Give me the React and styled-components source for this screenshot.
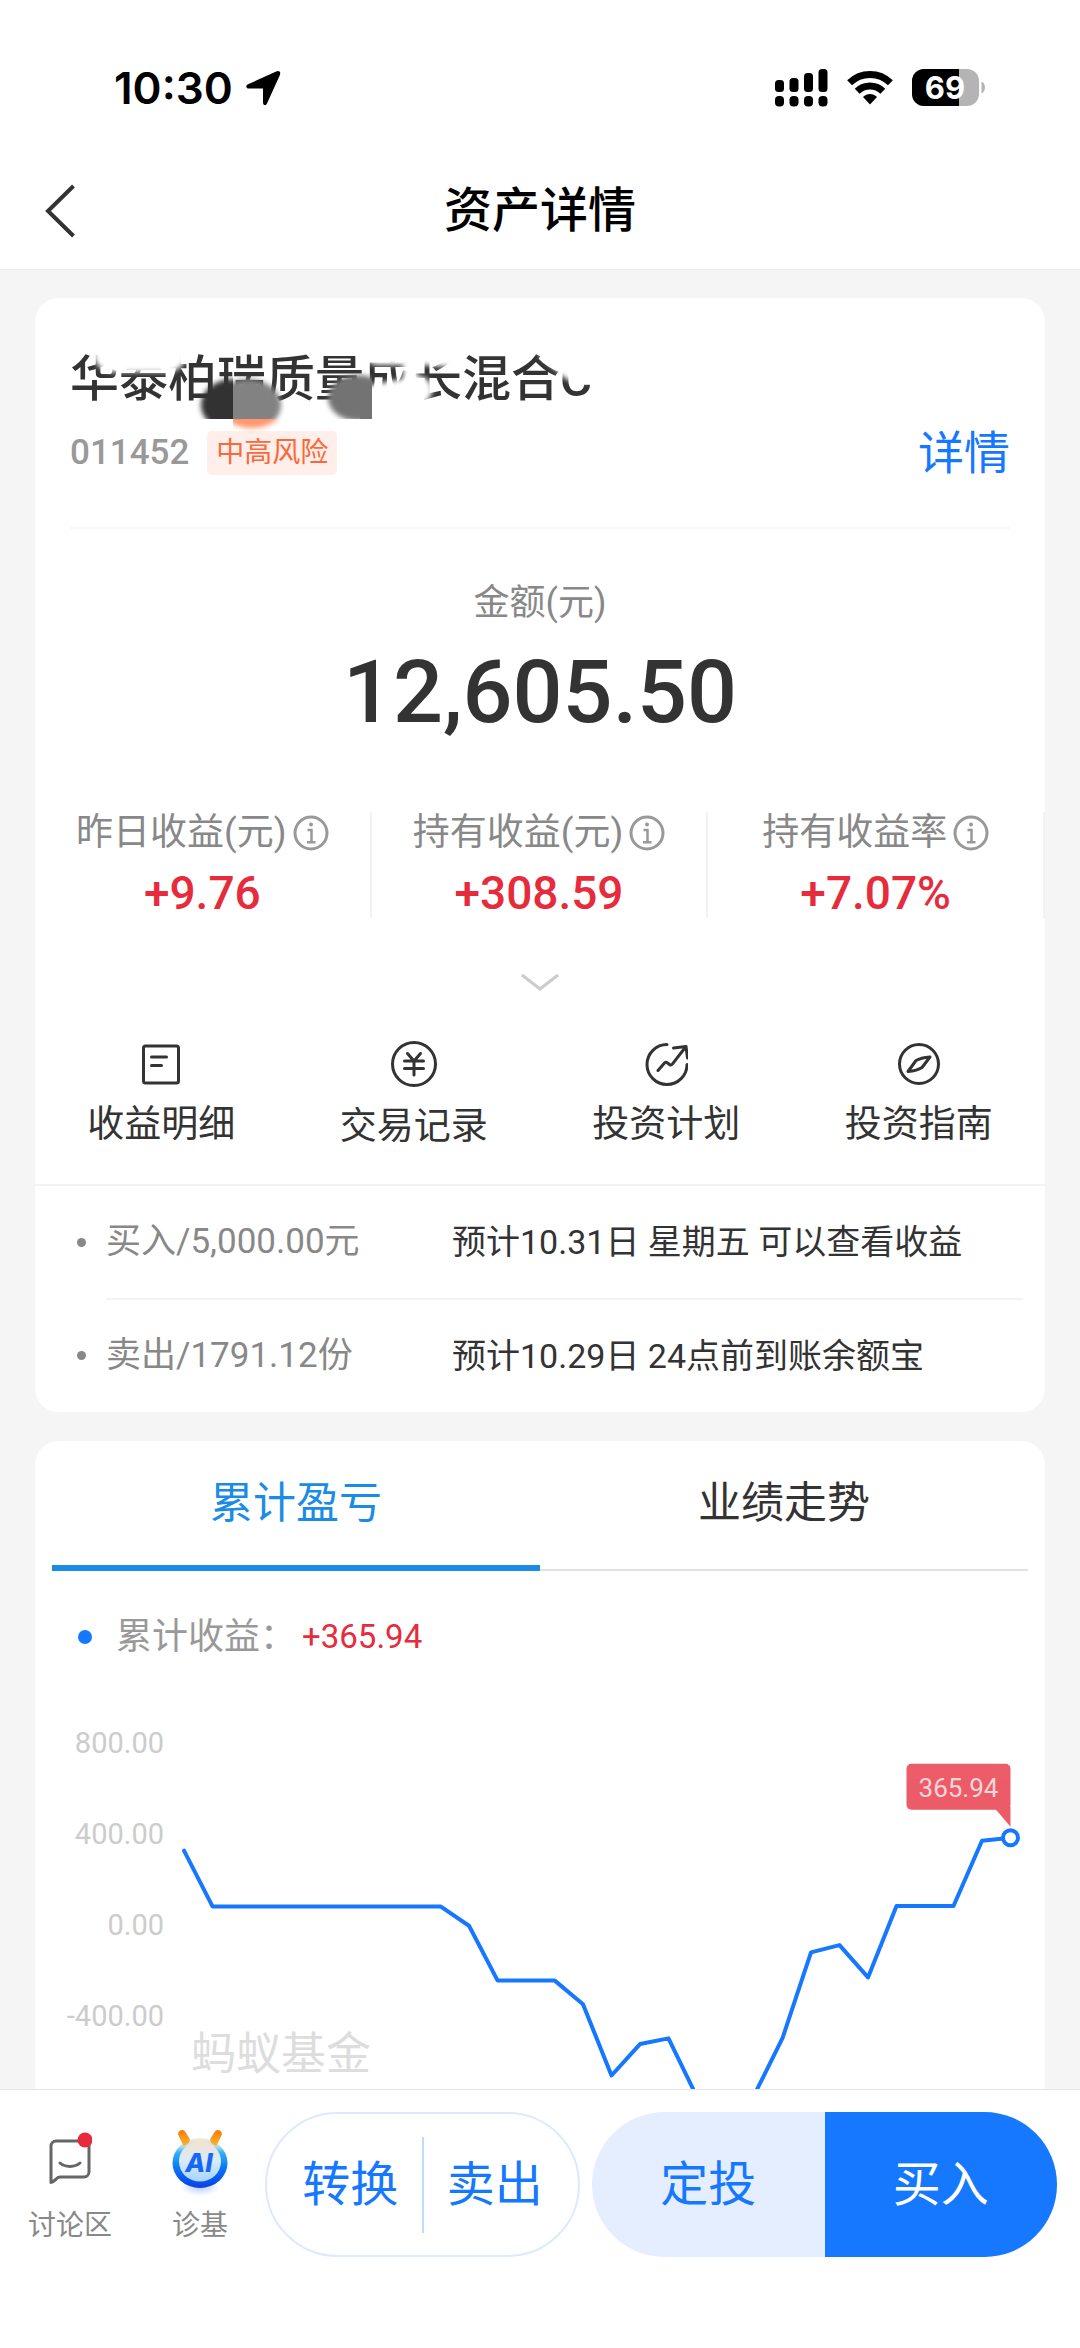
import React, { useState } from 'react';
import styled, { createGlobalStyle } from 'styled-components';

const GlobalStyle = createGlobalStyle`
  * {
    box-sizing: border-box;
  }

  body {
    margin: 0;
    background: #f5f5f5;
    color: #333;
    font-family: Roboto, 'Noto Sans CJK SC', sans-serif;
  }

  button {
    margin: 0;
    padding: 0;
    border: 0;
    background: none;
    color: inherit;
    font: inherit;
    cursor: pointer;
  }

  h1, h2, p, ul, dl, dd, dt {
    margin: 0;
    padding: 0;
    font-weight: inherit;
  }

  svg {
    display: block;
    flex: none;
  }
`;

const Screen = styled.div`
  display: flex;
  flex-direction: column;
  height: 100vh;
`;

const Header = styled.header`
  background: #fff;
  border-bottom: 1px solid #eee;
  flex: none;
`;

const StatusBar = styled.div`
  display: flex;
  align-items: center;
  justify-content: space-between;
  height: 152px;
  padding: 24px 94px 0 114px;
  color: #000;
`;

const StatusGroup = styled.div`
  display: flex;
  align-items: center;
  gap: ${(props) => props.$gap}px;
`;

const Clock = styled.span`
  font: 600 44px/56px Inter, sans-serif;
`;

const NavBar = styled.div`
  display: grid;
  grid-template-columns: 120px 1fr 120px;
  align-items: center;
  height: 117px;
`;

const BackButton = styled.button`
  display: flex;
  padding: 20px 44px;
`;

const Title = styled.h1`
  color: #000;
  font-size: 48px;
  font-weight: 500;
  line-height: 56px;
  text-align: center;
`;

const Content = styled.main`
  flex: 1;
  min-height: 0;
  padding: 28px 35px 0;
  overflow-y: auto;
  scrollbar-width: none;
`;

const Card = styled.section`
  margin-bottom: 29px;
  border-radius: 24px;
  background: #fff;
  overflow: hidden;
`;

const FundHead = styled.div`
  margin: 0 35px;
  padding: 54px 0 51px;
  border-bottom: 2px solid #f7f7f7;
`;

const FundName = styled.h2`
  position: relative;
  font-size: 49px;
  font-weight: 500;
  line-height: 56px;
`;

const Smudge = styled.svg`
  position: absolute;
  top: -2px;
  left: 0;
`;

const FundMeta = styled.div`
  display: flex;
  align-items: center;
  margin-top: 22px;
  line-height: 46px;
`;

const FundCode = styled.span`
  color: #999;
  font-size: 35px;
  font-weight: 500;
`;

const RiskTag = styled.span`
  margin-left: 18px;
  padding: 0 9px;
  border-radius: 5px;
  background: #ffeee9;
  color: #f9693a;
  font-size: 28px;
  line-height: 44px;
`;

const DetailLink = styled.a`
  margin-left: auto;
  color: #1677ff;
  font-size: 46px;
  text-decoration: none;
`;

const AmountLabel = styled.p`
  margin-top: 52px;
  color: #888;
  font-size: 36px;
  line-height: 44px;
  text-align: center;
`;

const Amount = styled.p`
  margin-top: 17px;
  font-size: 88px;
  font-weight: 500;
  line-height: 100px;
  text-align: center;
`;

const Stats = styled.dl`
  display: grid;
  grid-template-columns: repeat(3, 1fr);
  margin-top: 70px;
`;

const Stat = styled.div`
  border-right: 2px solid #f2f2f2;
`;

const StatLabel = styled.dt`
  display: flex;
  align-items: center;
  justify-content: center;
  gap: 6px;
  color: #888;
  font-size: 37px;
  line-height: 42px;
`;

const StatValue = styled.dd`
  margin-top: 14px;
  color: #e62c3c;
  font-size: 46px;
  font-weight: 500;
  line-height: 50px;
  text-align: center;
`;

const ExpandButton = styled.button`
  display: block;
  margin: 52px auto 0;
`;

const Actions = styled.nav`
  display: grid;
  grid-template-columns: repeat(4, 1fr);
  align-items: center;
  padding: 46px 0 34px;
  border-bottom: 2px solid #f3f3f3;
`;

const ActionButton = styled.button`
  display: flex;
  flex-direction: column;
  align-items: center;
  gap: 16px;
  font-size: 37px;
  line-height: 46px;
`;

const Orders = styled.ul`
  list-style: none;
`;

const Order = styled.li`
  display: flex;
  align-items: center;
  padding: 0 22px 0 42px;
  line-height: 44px;
`;

const Bullet = styled.span`
  flex: none;
  width: ${(props) => props.$size}px;
  height: ${(props) => props.$size}px;
  border-radius: 50%;
  background: ${(props) => props.$color};
`;

const OrderBody = styled.div`
  display: flex;
  align-items: center;
  flex: 1;
  min-height: 112px;
  margin-left: 20px;

  ${Order} + ${Order} & {
    min-height: 114px;
    border-top: 2px solid #f3f3f3;
  }
`;

const OrderName = styled.span`
  flex: 0 0 346px;
  color: #888;
  font-size: 35px;
`;

const OrderNote = styled.span`
  font-size: 34px;
`;

const Tabs = styled.div`
  display: grid;
  grid-template-columns: 1fr 1fr;
  margin: 0 17px;
  box-shadow: inset 0 -2px #e2e2e2;
`;

const Tab = styled.button`
  height: 130px;
  border-bottom: 6px solid ${(props) => (props.$active ? '#1b8ce6' : 'transparent')};
  color: ${(props) => (props.$active ? '#1b8ce6' : '#333')};
  font-size: 43px;
  line-height: 56px;
`;

const Legend = styled.p`
  display: flex;
  align-items: center;
  margin: 44px 43px 0;
  line-height: 44px;
`;

const LegendLabel = styled.span`
  margin-left: 24px;
  color: #999;
  font-size: 36px;
`;

const LegendValue = styled.span`
  margin-left: 6px;
  color: #e62c3c;
  font-size: 33px;
`;

const ChartSvg = styled.svg`
  width: 100%;
  height: auto;
`;

const Footer = styled.footer`
  display: flex;
  flex: none;
  align-items: flex-start;
  padding: 22px 23px 91px 5px;
  border-top: 1px solid #e6e6e6;
  background: #fff;
`;

const Shortcut = styled.button`
  display: flex;
  flex-direction: column;
  align-items: center;
  gap: 10px;
  width: 130px;
  padding-top: 14px;
  color: #888;
  font-size: 28px;
  line-height: 40px;
`;

const TradeBar = styled.div`
  display: grid;
  grid-template-columns: 315fr 465fr;
  gap: 12px;
  flex: 1;
`;

const Pill = styled.div`
  display: flex;
  align-items: center;
  height: 145px;
  padding: ${(props) => (props.$outlined ? '0 12px' : '0')};
  border: ${(props) => (props.$outlined ? '2px solid #dce9ff' : '0')};
  border-radius: 73px;
  overflow: hidden;
`;

const PillButton = styled.button`
  flex: 1;
  height: 100%;
  background: ${(props) => props.$bg || 'transparent'};
  color: ${(props) => props.$color || '#1677ff'};
  font-size: 48px;
  line-height: 56px;
`;

const PillDivider = styled.span`
  width: 2px;
  height: 96px;
  background: #bfdaff;
`;

const LocationIcon = () => (
  <svg width="36" height="36" viewBox="0 0 36 36">
    <path d="M34.500 1.500c1 .9.900 2.200.4 3.400L22 33.500c-1.200 2.600-4 1.900-4-1V18.500H4c-3 0-3.700-3-1-4.200L31.200 1.400c1.300-.6 2.400-.7 3.300.1z" />
  </svg>
);

const SignalIcon = () => (
  <svg width="53" height="38" viewBox="0 0 53 38">
    {[11, 9, 4, 0].map((top, i) => (
      <g key={top}>
        <rect x={i * 14.500} y={top} width="9" height={23 - top} rx="3.500" />
        <rect x={i * 14.500} y="27" width="9" height="10.500" rx="4" />
      </g>
    ))}
  </svg>
);

const WifiIcon = () => (
  <svg width="46" height="36" viewBox="0 0 46 36">
    <g fill="none" stroke="#000" strokeWidth="7">
      <path d="M2.600 12.800a29 29 0 0 1 40.800 0" />
      <path d="M10.200 21.200a18.200 18.200 0 0 1 25.600 0" />
    </g>
    <path d="M23 34.500l-7-7.500c3.800-4 10.200-4 14 0z" />
  </svg>
);

const BatteryIcon = () => (
  <svg width="74" height="38" viewBox="0 0 74 38">
    <defs>
      <clipPath id="battery">
        <rect width="67" height="37" rx="12" />
      </clipPath>
    </defs>
    <g clipPath="url(#battery)">
      <rect width="67" height="37" fill="#b4b4b4" />
      <rect width="47" height="37" />
    </g>
    <path d="M69.500 12.500c4.600 1.800 4.600 10.200 0 12z" fill="#b4b4b4" />
    <text x="33" y="30" fill="#fff" fontFamily="Inter, sans-serif" fontSize="31" fontWeight="700" textAnchor="middle">
      69
    </text>
  </svg>
);

const BackIcon = () => (
  <svg width="32" height="54" viewBox="0 0 32 54" fill="none" stroke="#333" strokeWidth="4">
    <path d="M29.500 2L4 27l25.500 25" />
  </svg>
);

const InfoIcon = () => (
  <svg width="36" height="36" viewBox="0 0 36 36" fill="none" stroke="#999" strokeWidth="3">
    <circle cx="18" cy="18" r="16" />
    <path d="M14.500 15h4v12M14 27.200h8.500" strokeWidth="2.500" />
    <circle cx="18" cy="9.500" r="2" fill="#999" stroke="none" />
  </svg>
);

const ChevronIcon = () => (
  <svg width="40" height="24" viewBox="0 0 40 24" fill="none" stroke="#ccc" strokeWidth="3">
    <path d="M2 5l18 14L38 5" />
  </svg>
);

const lineIcon = {
  fill: 'none',
  stroke: '#333',
  strokeWidth: 3,
  strokeLinecap: 'round',
  strokeLinejoin: 'round',
};

const ListIcon = () => (
  <svg width="44" height="44" viewBox="0 0 44 44" {...lineIcon}>
    <rect x="4.500" y="4" width="35" height="37" rx="2" />
    <path d="M12.500 15h15M12.500 23.500h10" />
  </svg>
);

const YuanIcon = () => (
  <svg width="48" height="48" viewBox="0 0 48 48" {...lineIcon}>
    <circle cx="24" cy="24" r="21.500" />
    <path d="M17.500 13.500L24 21l6.500-7.500M24 21v14M14.500 21h19M14.500 28.500h19" />
  </svg>
);

const PlanIcon = () => (
  <svg width="44" height="44" viewBox="0 0 44 44" {...lineIcon}>
    <path d="M23 2.500A20 20 0 1 0 43 22.500" />
    <path d="M14 28.500l6.500-7.500c1-1 2-1 3 0l2 1.500c1 .8 2 .6 3-.6L42 4.500M29.500 6L42 4.500l1.500 11.500" />
  </svg>
);

const CompassIcon = () => (
  <svg width="44" height="44" viewBox="0 0 44 44" {...lineIcon}>
    <circle cx="22" cy="22" r="19.500" />
    <path d="M33 15l-8 10.500c-3.500 2.300-8.500 3.500-14 4L19 18.500c3.500-2 8.500-3 14-3.500z" />
  </svg>
);

const ForumIcon = () => (
  <svg width="44" height="70" viewBox="0 0 44 70" fill="none" stroke="#666" strokeWidth="3">
    <path d="M3 53V20a5 5 0 0 1 5-5h28a5 5 0 0 1 5 5v26a5 5 0 0 1-5 5H12c-4 0-5.500 5.500-9 5.500z" strokeLinejoin="round" />
    <path d="M12 37c5 4.500 15 4.500 20 0" strokeLinecap="round" />
    <circle cx="37" cy="14" r="7.500" fill="#e62c3c" stroke="none" />
  </svg>
);

const AiIcon = () => (
  <svg width="60" height="70" viewBox="0 -4 60 70">
    <defs>
      <linearGradient id="ring" x1="0" y1="0" x2="0" y2="1">
        <stop offset="0" stopColor="#ffe9cf" />
        <stop offset="0.150" stopColor="#bfe3ee" />
        <stop offset="0.300" stopColor="#2fb0f5" />
        <stop offset="0.600" stopColor="#0b76f6" />
        <stop offset="1" stopColor="#0a3fe6" />
      </linearGradient>
      <linearGradient id="face" x1="0" y1="0" x2="0" y2="1">
        <stop offset="0" stopColor="#f3e2cf" />
        <stop offset="0.500" stopColor="#d8ebfb" />
        <stop offset="1" stopColor="#a5d4fc" />
      </linearGradient>
      <linearGradient id="horn" x1="0" y1="0" x2="0" y2="1">
        <stop offset="0" stopColor="#f57a0a" />
        <stop offset="1" stopColor="#ffb52e" />
      </linearGradient>
      <radialGradient id="glow">
        <stop offset="0" stopColor="#b9ccff" />
        <stop offset="1" stopColor="#fff" />
      </radialGradient>
    </defs>
    <ellipse cx="30" cy="57" rx="20" ry="9" fill="url(#glow)" />
    <ellipse cx="30" cy="33" rx="27.500" ry="25" fill="url(#ring)" />
    <ellipse cx="30" cy="31.500" rx="21" ry="20" fill="url(#face)" />
    <path d="M9.500 1c2-1.700 4.500-1 5.700.8l4.300 6.700c1.500 3-2.500 6.500-6 7.500L8.700 5.800c-1-1.700-.8-3.500.8-4.800z" fill="url(#horn)" />
    <path d="M50.500 1c-2-1.700-4.500-1-5.700.8l-4.300 6.700c-1.500 3 2.500 6.500 6 7.500l4.800-10.200c1-1.700.8-3.500-.8-4.800z" fill="url(#horn)" />
    <text
      x="29"
      y="42"
      fill="#1767f5"
      fontFamily="Inter, sans-serif"
      fontSize="26"
      fontStyle="italic"
      fontWeight="800"
      textAnchor="middle"
    >
      AI
    </text>
  </svg>
);

// brush marks hiding parts of the fund name
const NameSmudge = () => (
  <Smudge width="530" height="90" viewBox="0 0 530 90" aria-hidden="true">
    <defs>
      <filter id="soft" x="-20%" y="-50%" width="140%" height="200%">
        <feGaussianBlur stdDeviation="2.500" />
      </filter>
      <clipPath id="clipLeft"><rect x="120" y="10" width="43" height="59" /></clipPath>
      <clipPath id="clipRight"><rect x="163" y="10" width="60" height="59" /></clipPath>
      <clipPath id="clipTag"><rect x="163" y="69" width="60" height="20" /></clipPath>
      <clipPath id="clipLast"><rect x="240" y="10" width="62" height="59" /></clipPath>
    </defs>
    <g stroke="#fff" strokeLinecap="round" fill="none" filter="url(#soft)">
      <path d="M42 4h56" strokeWidth="36" />
      <path d="M308 2h44" strokeWidth="26" />
      <path d="M298 50l50-10" strokeWidth="28" />
      <path d="M340 8v38" strokeWidth="14" />
      <path d="M352 2l28 2" strokeWidth="26" />
      <path d="M480 0l16 14" strokeWidth="22" />
      <path d="M508 8h18" strokeWidth="48" />
    </g>
    <g clipPath="url(#clipLeft)">
      <ellipse cx="163" cy="55" rx="32" ry="26" fill="#333" filter="url(#soft)" />
    </g>
    <g clipPath="url(#clipRight)">
      <ellipse cx="178" cy="55" rx="33" ry="26" fill="#828282" filter="url(#soft)" />
    </g>
    <g clipPath="url(#clipTag)">
      <ellipse cx="182" cy="62" rx="28" ry="16" fill="#ff9770" filter="url(#soft)" />
    </g>
    <g clipPath="url(#clipLast)">
      <ellipse cx="288" cy="48" rx="30" ry="23" fill="#737373" filter="url(#soft)" />
      <rect x="290" y="35" width="12" height="34" fill="#737373" />
    </g>
  </Smudge>
);

const stats = [
  { label: '昨日收益(元)', value: '+9.76' },
  { label: '持有收益(元)', value: '+308.59' },
  { label: '持有收益率', value: '+7.07%' },
];

const actions = [
  { label: '收益明细', Icon: ListIcon },
  { label: '交易记录', Icon: YuanIcon },
  { label: '投资计划', Icon: PlanIcon },
  { label: '投资指南', Icon: CompassIcon },
];

const orders = [
  { name: '买入/5,000.00元', note: '预计10.31日 星期五 可以查看收益' },
  { name: '卖出/1791.12份', note: '预计10.29日 24点前到账余额宝' },
];

const profit = [
  309, 64, 64, 64, 64, 64, 64, 64, 64, 64, -21, -261, -261, -261, -366, -679, -541, -516, -774, -900,
  -767, -515, -138, -106, -248, 66, 66, 66, 353, 365.94,
];

const ticks = [800, 400, 0, -400];

const ZERO_Y = 262;
const toX = (i) => 149 + i * 28.5;
const toY = (value) => ZERO_Y - (value * 91) / 400;

const ProfitChart = () => {
  const last = profit.length - 1;
  const endX = toX(last);
  const endY = toY(profit[last]);

  return (
    <ChartSvg viewBox="0 0 1010 500" role="img" aria-label="累计收益走势">
      {ticks.map((tick) => (
        <text key={tick} x="129" y={toY(tick) + 14} fill="#ccc" fontSize="29" textAnchor="end">
          {tick.toFixed(2)}
        </text>
      ))}
      <text x="156" y="411" fill="#ddd" fontSize="45">蚂蚁基金</text>
      <polyline
        points={profit.map((value, i) => `${toX(i)},${toY(value)}`).join(' ')}
        fill="none"
        stroke="#1677ff"
        strokeWidth="4"
        strokeLinecap="round"
        strokeLinejoin="round"
      />
      <g fill="#e62c3c" opacity="0.770">
        <rect x={endX - 104} y={endY - 74} width="104" height="46" rx="5" />
        <path d={`M${endX - 17} ${endY - 31}h17v20z`} />
      </g>
      <text x={endX - 52} y={endY - 41} fill="#ffd5d9" fontSize="26" textAnchor="middle">
        {profit[last]}
      </text>
      <circle cx={endX} cy={endY} r="7.500" fill="#fff" stroke="#1677ff" strokeWidth="4" />
    </ChartSvg>
  );
};

const App = () => {
  const [tab, setTab] = useState('累计盈亏');

  return (
    <Screen>
      <GlobalStyle />
      <Header>
        <StatusBar>
          <StatusGroup $gap={12}>
            <Clock>10:30</Clock>
            <LocationIcon />
          </StatusGroup>
          <StatusGroup $gap={19}>
            <SignalIcon />
            <WifiIcon />
            <BatteryIcon />
          </StatusGroup>
        </StatusBar>
        <NavBar>
          <BackButton aria-label="返回">
            <BackIcon />
          </BackButton>
          <Title>资产详情</Title>
        </NavBar>
      </Header>

      <Content>
        <Card>
          <FundHead>
            <FundName>
              华泰柏瑞质量成长混合C
              <NameSmudge />
            </FundName>
            <FundMeta>
              <FundCode>011452</FundCode>
              <RiskTag>中高风险</RiskTag>
              <DetailLink href="#detail">详情</DetailLink>
            </FundMeta>
          </FundHead>

          <AmountLabel>金额(元)</AmountLabel>
          <Amount>12,605.50</Amount>

          <Stats>
            {stats.map(({ label, value }) => (
              <Stat key={label}>
                <StatLabel>
                  {label}
                  <InfoIcon />
                </StatLabel>
                <StatValue>{value}</StatValue>
              </Stat>
            ))}
          </Stats>

          <ExpandButton aria-label="展开">
            <ChevronIcon />
          </ExpandButton>

          <Actions>
            {actions.map(({ label, Icon }) => (
              <ActionButton key={label}>
                <Icon />
                {label}
              </ActionButton>
            ))}
          </Actions>

          <Orders>
            {orders.map(({ name, note }) => (
              <Order key={name}>
                <Bullet $size={9} $color="#888" />
                <OrderBody>
                  <OrderName>{name}</OrderName>
                  <OrderNote>{note}</OrderNote>
                </OrderBody>
              </Order>
            ))}
          </Orders>
        </Card>

        <Card>
          <Tabs role="tablist">
            {['累计盈亏', '业绩走势'].map((name) => (
              <Tab
                key={name}
                role="tab"
                aria-selected={tab === name}
                $active={tab === name}
                onClick={() => setTab(name)}
              >
                {name}
              </Tab>
            ))}
          </Tabs>
          <Legend>
            <Bullet $size={14} $color="#1677ff" />
            <LegendLabel>累计收益：</LegendLabel>
            <LegendValue>+365.94</LegendValue>
          </Legend>
          <ProfitChart />
        </Card>
      </Content>

      <Footer>
        <Shortcut>
          <ForumIcon />
          讨论区
        </Shortcut>
        <Shortcut>
          <AiIcon />
          诊基
        </Shortcut>
        <TradeBar>
          <Pill $outlined>
            <PillButton>转换</PillButton>
            <PillDivider />
            <PillButton>卖出</PillButton>
          </Pill>
          <Pill>
            <PillButton $bg="#e4eeff">定投</PillButton>
            <PillButton $bg="#1677ff" $color="#fff">买入</PillButton>
          </Pill>
        </TradeBar>
      </Footer>
    </Screen>
  );
};

export default App;
